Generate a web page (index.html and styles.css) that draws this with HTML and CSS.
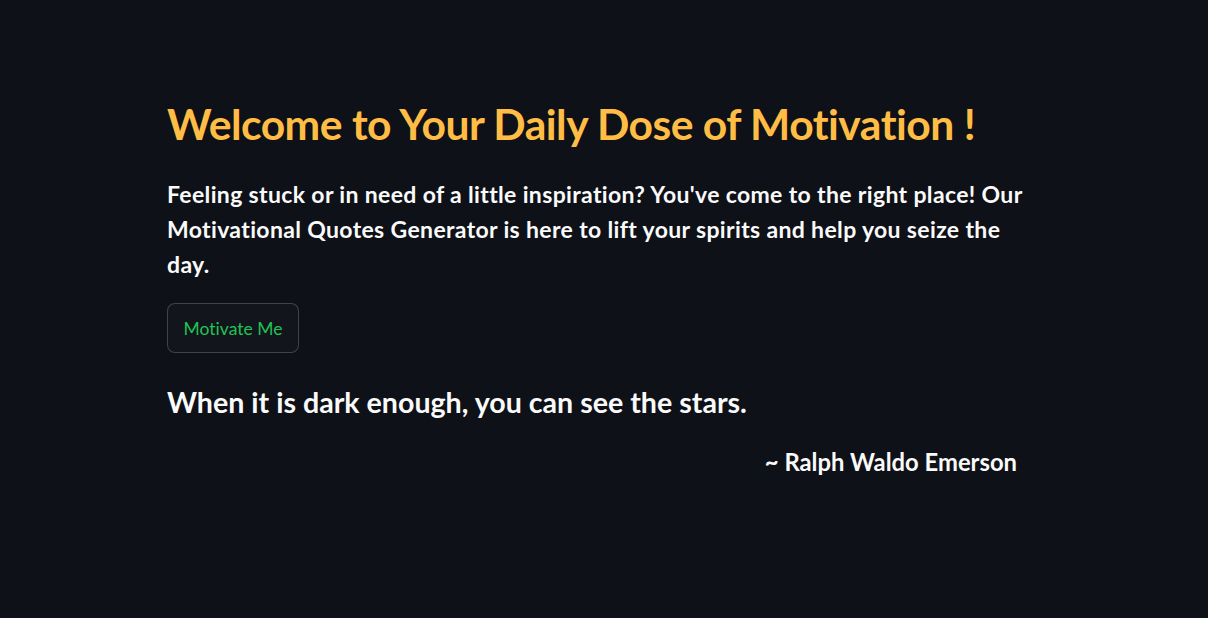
FILE: index.html
```html
<!DOCTYPE html>
<html lang="en">
<head>
<meta charset="utf-8">
<title>Motivational Quotes Generator</title>
<link rel="stylesheet" href="styles.css">
</head>
<body>
<main class="app">
  <section class="block">
    <h1 class="title">Welcome to Your Daily Dose of Motivation !</h1>
    <p class="intro">Feeling stuck or in need of a little inspiration? You've come to the right place! Our Motivational Quotes Generator is here to lift your spirits and help you seize the<br>day.</p>
    <button class="btn" type="button">Motivate Me</button>
    <h3 class="quote">When it is dark enough, you can see the stars.</h3>
    <p class="author">~ Ralph Waldo Emerson</p>
  </section>
</main>
</body>
</html>
```
FILE: styles.css
```css
html, body {
  margin: 0;
  padding: 0;
  background: #0e1117;
  height: 100%;
}
body {
  font-family: Lato, "Noto Sans", sans-serif;
  font-variant-ligatures: none;
  color: #fafafa;
}
.app {
  display: flex;
  justify-content: flex-start;
  padding: 96px 0 0 167px;
}
.block {
  width: 874px;
  display: flex;
  flex-direction: column;
  align-items: flex-start;
}
.title {
  margin: 0;
  font-size: 42.6px;
  font-weight: 700;
  line-height: 56px;
  color: #ffbd45;
  letter-spacing: -0.5px;
}
.intro {
  margin: 25px 0 0;
  font-size: 23px;
  font-weight: 700;
  line-height: 35px;
  letter-spacing: 0.35px;
}
.btn {
  margin-top: 21px;
  height: 50px;
  width: 132px;
  padding: 0;
  background: #12151c;
  border: 1px solid rgba(250, 250, 250, 0.2);
  border-radius: 8px;
  color: #21c354;
  font-family: inherit;
  font-variant-ligatures: none;
  font-size: 17.5px;
  font-weight: 400;
}
.quote {
  margin: 30px 0 0;
  font-size: 28.6px;
  font-weight: 700;
  line-height: 38px;
}
.author {
  align-self: stretch;
  margin: 26px 0 0;
  padding-right: 24px;
  text-align: right;
  font-size: 23.8px;
  font-weight: 700;
  line-height: 30px;
}
```
